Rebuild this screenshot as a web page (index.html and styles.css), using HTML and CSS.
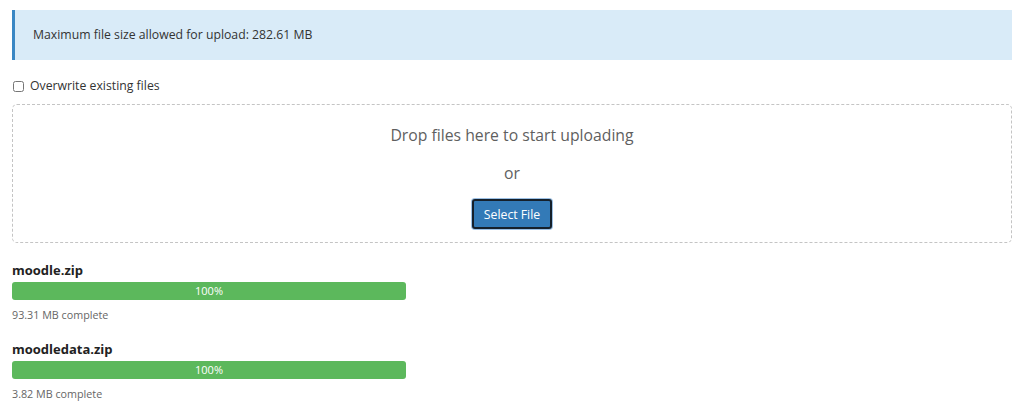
FILE: index.html
```html
<!DOCTYPE html>
<html lang="en">
<head>
    <meta charset="UTF-8">
    <meta name="viewport" content="width=device-width, initial-scale=1.0">
    <title>Upload Files</title>
    <link rel="stylesheet" href="styles.css">
</head>
<body>
    <div class="alert-info">Maximum file size allowed for upload: 282.61 MB</div>

    <label class="overwrite">
        <input type="checkbox" id="overwrite">
        Overwrite existing files
    </label>

    <div class="dropzone">
        <div class="drop-text">Drop files here to start uploading</div>
        <div class="drop-or">or</div>
        <button class="btn-select">Select File</button>
    </div>

    <div class="uploads">
        <div class="upload-item">
            <div class="file-name">moodle.zip</div>
            <div class="progress"><div class="progress-bar" style="width: 100%">100%</div></div>
            <div class="file-status">93.31 MB complete</div>
        </div>
        <div class="upload-item">
            <div class="file-name">moodledata.zip</div>
            <div class="progress"><div class="progress-bar" style="width: 100%">100%</div></div>
            <div class="file-status">3.82 MB complete</div>
        </div>
    </div>
</body>
</html>
```

FILE: styles.css
```css
body {
    margin: 0;
    padding: 10px 12px;
    font-family: "Open Sans", Arial, sans-serif;
    font-size: 12.25px;
    color: #333;
    background: #fff;
}
.alert-info {
    height: 50px;
    box-sizing: border-box;
    padding: 15px 18px;
    line-height: 20px;
    background-color: #d9ebf8;
    border-left: 3px solid #3a87c4;
}
.overwrite {
    display: flex;
    align-items: center;
    margin-top: 16px;
    height: 20px;
    line-height: 20px;
    color: #333;
}
.overwrite input {
    margin: 0 6px 0 1px;
    width: 11px;
    height: 11px;
}
.dropzone {
    margin-top: 8px;
    height: 139px;
    box-sizing: border-box;
    padding-top: 18px;
    border: 1px dashed #c4c4c4;
    border-radius: 5px;
    text-align: center;
}
.drop-text, .drop-or {
    font-size: 15.75px;
    line-height: 24px;
    color: #5f5f5f;
}
.drop-or {
    margin-top: 14px;
}
.btn-select {
    margin-top: 14px;
    height: 30px;
    padding: 0 10px;
    font-family: "Open Sans", Arial, sans-serif;
    font-size: 12.25px;
    color: #fff;
    background-color: #337ab7;
    border: 2px solid #15202b;
    border-radius: 3px;
    box-shadow: 0 0 0 1px #9cc0e4;
    cursor: pointer;
}
.uploads {
    margin-top: 17px;
    width: 394px;
}
.upload-item {
    margin-bottom: 16px;
}
.file-name {
    font-size: 13px;
    font-weight: bold;
    line-height: 20px;
    color: #222;
}
.progress {
    margin-top: 2px;
    height: 18px;
    border-radius: 3px;
    background-color: #f0f0f0;
    overflow: hidden;
}
.progress-bar {
    height: 100%;
    background-color: #5cb85c;
    color: #fff;
    font-size: 11px;
    line-height: 18px;
    text-align: center;
}
.file-status {
    margin-top: 7px;
    font-size: 10.75px;
    line-height: 16px;
    color: #666;
}
```
